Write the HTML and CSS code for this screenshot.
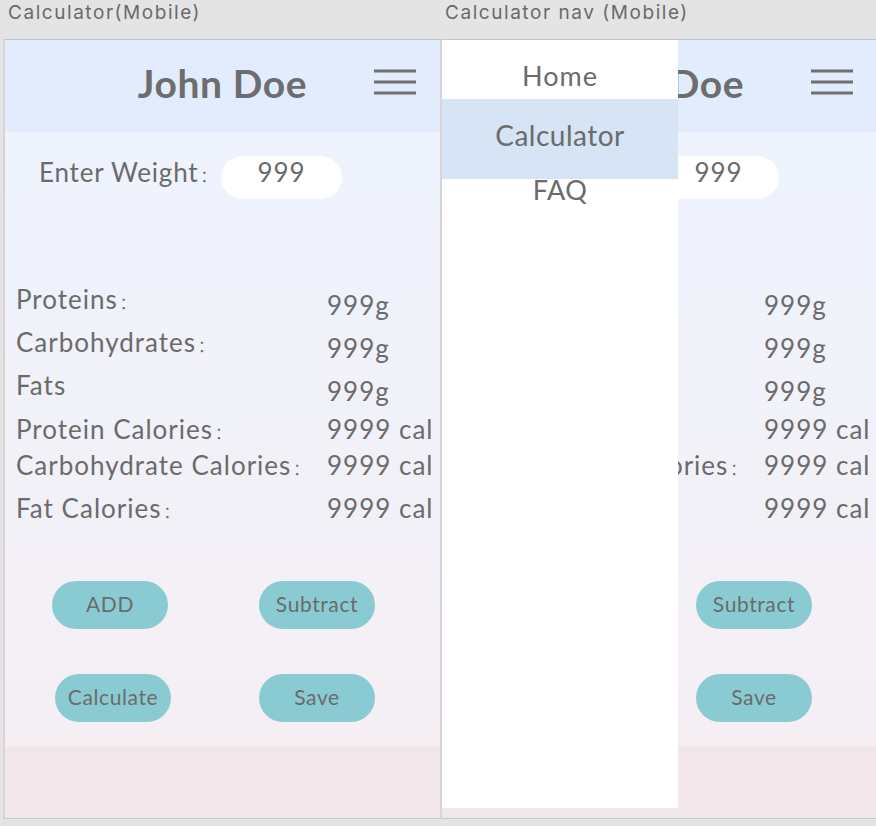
FILE: index.html
```html
<!DOCTYPE html>
<html lang="en">
<head>
<meta charset="utf-8">
<title>Calculator frames</title>
<link rel="stylesheet" href="styles.css">
</head>
<body>
<div class="canvas">
  <section class="col">
    <div class="frame-label">Calculator(Mobile)</div>
    <div class="frame">
      <header class="app-header">
        <h1 class="title">John Doe</h1>
        <svg class="burger" width="42" height="27" viewBox="0 0 42 27"><path d="M0 2H42M0 13H42M0 24H42" stroke="#707070" stroke-width="3"/></svg>
      </header>
      <main class="app-body">
        <div class="weight-row">
          <span class="weight-label">Enter Weight<span class="colon">：</span></span>
          <div class="weight-input">999</div>
        </div>
        <div class="results">
          <div class="row r1"><span class="label">Proteins<span class="colon">：</span></span><span class="value low">999g</span></div>
          <div class="row r2"><span class="label">Carbohydrates<span class="colon">：</span></span><span class="value low">999g</span></div>
          <div class="row r3"><span class="label">Fats</span><span class="value low">999g</span></div>
          <div class="row r4"><span class="label">Protein Calories<span class="colon">：</span></span><span class="value">9999 cal</span></div>
          <div class="row r5"><span class="label">Carbohydrate Calories<span class="colon">：</span></span><span class="value">9999 cal</span></div>
          <div class="row r6"><span class="label">Fat Calories<span class="colon">：</span></span><span class="value">9999 cal</span></div>
        </div>
        <div class="buttons">
          <button class="btn">ADD</button>
          <button class="btn">Subtract</button>
          <button class="btn shift">Calculate</button>
          <button class="btn">Save</button>
        </div>
      </main>
      <footer class="app-footer"></footer>
    </div>
  </section>
  <section class="col">
    <div class="frame-label">Calculator nav (Mobile)</div>
    <div class="frame">
      <header class="app-header">
        <h1 class="title">John Doe</h1>
        <svg class="burger" width="42" height="27" viewBox="0 0 42 27"><path d="M0 2H42M0 13H42M0 24H42" stroke="#707070" stroke-width="3"/></svg>
      </header>
      <main class="app-body">
        <div class="weight-row">
          <span class="weight-label">Enter Weight<span class="colon">：</span></span>
          <div class="weight-input">999</div>
        </div>
        <div class="results">
          <div class="row r1"><span class="label">Proteins<span class="colon">：</span></span><span class="value low">999g</span></div>
          <div class="row r2"><span class="label">Carbohydrates<span class="colon">：</span></span><span class="value low">999g</span></div>
          <div class="row r3"><span class="label">Fats</span><span class="value low">999g</span></div>
          <div class="row r4"><span class="label">Protein Calories<span class="colon">：</span></span><span class="value">9999 cal</span></div>
          <div class="row r5"><span class="label">Carbohydrate Calories<span class="colon">：</span></span><span class="value">9999 cal</span></div>
          <div class="row r6"><span class="label">Fat Calories<span class="colon">：</span></span><span class="value">9999 cal</span></div>
        </div>
        <div class="buttons">
          <button class="btn">ADD</button>
          <button class="btn">Subtract</button>
          <button class="btn shift">Calculate</button>
          <button class="btn">Save</button>
        </div>
      </main>
      <footer class="app-footer"></footer>
      <nav class="nav-panel">
        <a class="nav-item home">Home</a>
        <a class="nav-item active">Calculator</a>
        <a class="nav-item faq">FAQ</a>
      </nav>
    </div>
  </section>
</div>
</body>
</html>
```
FILE: styles.css
```css
* { box-sizing: border-box; }
html, body { margin: 0; padding: 0; }
body {
  width: 876px;
  height: 826px;
  overflow: hidden;
  background: #e4e4e4;
  font-family: Lato, "Noto Sans CJK SC", sans-serif;
  color: #6b6b6b;
}
.canvas {
  display: flex;
  padding-left: 3px;
  width: 876px;
  overflow: hidden;
}
.col {
  flex: 0 0 437px;
  display: flex;
  flex-direction: column;
}
.frame-label {
  height: 39px;
  padding: 1px 0 0 5px;
  font-family: Inter, "Liberation Sans", sans-serif;
  font-size: 19px;
  letter-spacing: 1.55px;
  line-height: 24px;
  color: #6a6a6a;
  white-space: nowrap;
}
.frame {
  position: relative;
  height: 780px;
  border-top: 1px solid #c7c7c7;
  border-bottom: 1px solid #cacaca;
  border-left: 2px solid #d9d2d6;
  display: flex;
  flex-direction: column;
  overflow: hidden;
}
.app-header {
  height: 92px;
  flex: 0 0 92px;
  background: #e2ecfc;
  display: flex;
  align-items: center;
  justify-content: center;
  position: relative;
}
.title {
  margin: 0 0 6px 0;
  font-size: 39px;
  font-weight: 700;
  color: #6d6d6d;
  letter-spacing: 0.6px;
}
.burger {
  position: absolute;
  right: 24px;
  top: 29px;
}
.app-body {
  flex: 0 0 614px;
  background: linear-gradient(#eef3fd, #f5eff4);
  padding-top: 24px;
}
.app-footer {
  flex: 1 1 auto;
  background: #f1e6ea;
}
.colon {
  font-family: "Noto Sans CJK SC", sans-serif;
  font-size: 0.6em;
  margin-left: 2px;
  letter-spacing: 0;
}
.weight-row {
  display: flex;
  align-items: flex-start;
  height: 43px;
  padding-left: 34px;
}
.weight-label {
  font-size: 26px;
  letter-spacing: 0.8px;
  line-height: 30px;
  margin-top: 1px;
  width: 182px;
  white-space: nowrap;
}
.weight-input {
  width: 121px;
  height: 43px;
  background: #ffffff;
  border-radius: 22px;
  text-align: center;
  font-size: 26px;
  letter-spacing: 1px;
  line-height: 30px;
  padding-top: 1px;
}
.results {
  margin-top: 85px;
  padding-left: 11px;
}
.row {
  display: grid;
  grid-template-columns: 311px auto;
  font-size: 26px;
  letter-spacing: 1px;
  line-height: 30px;
  white-space: nowrap;
}
.r1, .r2 { height: 43px; }
.r3 { height: 44px; }
.r4 { height: 36px; }
.r5 { height: 43px; }
.r6 { height: 30px; }
.value.low { padding-top: 6px; }
.buttons {
  margin-top: 58px;
  padding-left: 47px;
  display: grid;
  grid-template-columns: 207px 116px;
  row-gap: 45px;
}
.btn {
  width: 116px;
  height: 48px;
  border: none;
  border-radius: 24px;
  background: #8acbd3;
  color: #6b6b6b;
  font-family: Lato, sans-serif;
  font-size: 21px;
  letter-spacing: 0.6px;
  padding: 0 0 3px 0;
}
.btn.shift { margin-left: 3px; }
.nav-panel {
  position: absolute;
  left: 0;
  top: 0;
  width: 236px;
  height: 768px;
  background: #ffffff;
  display: flex;
  flex-direction: column;
}
.nav-item {
  display: block;
  text-align: center;
  color: #6b6b6b;
}
.nav-item.home {
  height: 59px;
  padding-top: 21px;
  font-size: 27px;
  letter-spacing: 1px;
  line-height: 30px;
}
.nav-item.active {
  height: 80px;
  background: #d6e4f5;
  padding-top: 19px;
  font-size: 28px;
  letter-spacing: 0.5px;
  line-height: 34px;
}
.nav-item.faq {
  font-size: 27px;
  letter-spacing: 0.5px;
  line-height: 30px;
  margin-top: -4px;
}
```
